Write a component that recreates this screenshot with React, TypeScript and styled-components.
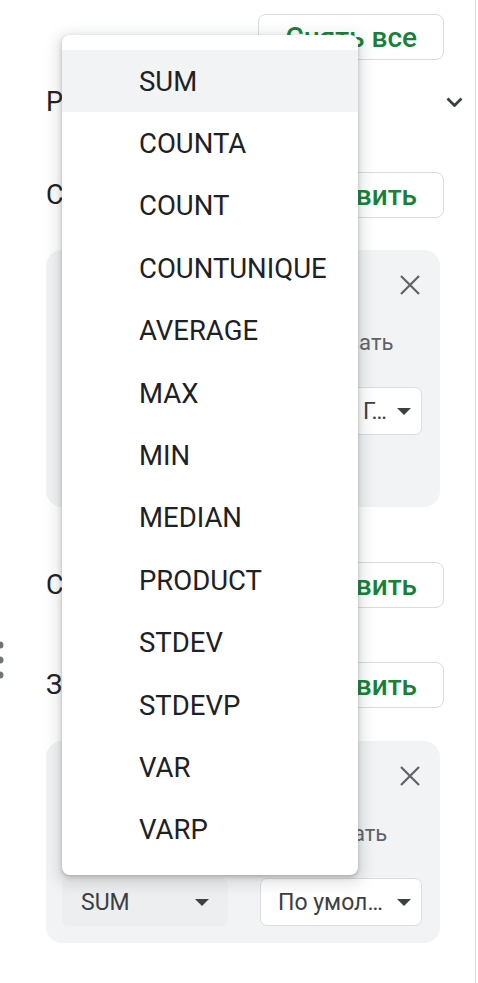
import styled, { createGlobalStyle } from "styled-components";

const GlobalStyle = createGlobalStyle`
  html, body {
    margin: 0;
    padding: 0;
    background: #ffffff;
  }
  body {
    font-family: Roboto, "Noto Sans", Arial, sans-serif;
    color: #202124;
    overflow: hidden;
  }
`;

const Page = styled.div`
  position: relative;
  box-sizing: border-box;
  width: 476px;
  min-height: 983px;
  padding: 14px 31px 0 46px;
  border-right: 1px solid #dadce0;
  display: flex;
  flex-direction: column;
`;

const TopBar = styled.div`
  display: flex;
  justify-content: flex-end;
  align-items: center;
  height: 46px;
`;

const OutlineButton = styled.button`
  box-sizing: border-box;
  height: 46px;
  padding: 0 26px;
  border: 1px solid #dadce0;
  border-radius: 8px;
  background: #ffffff;
  color: #188038;
  font-family: Roboto, Arial, sans-serif;
  font-size: 28px;
  font-weight: 500;
  cursor: pointer;
`;

const Row = styled.div<{ $top: number }>`
  display: flex;
  justify-content: space-between;
  align-items: center;
  height: 46px;
  margin-top: ${(p) => p.$top}px;
`;

const SectionLabel = styled.span`
  font-size: 27px;
  color: #202124;
`;

const ChevronBox = styled.span`
  display: flex;
  align-items: center;
  margin-right: -19px;
  color: #3c4043;
`;

const Card = styled.div<{ $top: number }>`
  margin-top: ${(p) => p.$top}px;
  margin-right: 4px;
  padding: 15px 18px 17px 16px;
  border-radius: 16px;
  background: #f1f3f4;
  display: flex;
  flex-direction: column;
`;

const CardHeader = styled.div`
  display: flex;
  justify-content: space-between;
  align-items: center;
  height: 40px;
`;

const FieldName = styled.span`
  font-size: 25px;
  font-weight: 500;
  color: #202124;
`;

const CloseButton = styled.span`
  display: flex;
  align-items: center;
  margin-right: 2px;
  color: #5f6368;
`;

const Fields = styled.div`
  display: grid;
  grid-template-columns: 166px 1fr;
  column-gap: 32px;
  margin-top: 23px;
`;

const FieldLabel = styled.span`
  font-size: 22px;
  line-height: 30px;
  color: #5f6368;
  white-space: nowrap;
`;

const Select = styled.div<{ $active?: boolean }>`
  box-sizing: border-box;
  height: 48px;
  margin-top: 29px;
  display: flex;
  align-items: center;
  justify-content: space-between;
  padding: ${(p) => (p.$active ? "0 18px" : "0 10px 0 17px")};
  border-radius: 7px;
  border: 1px solid ${(p) => (p.$active ? "transparent" : "#dadce0")};
  background: ${(p) => (p.$active ? "#eceef0" : "#ffffff")};
  font-size: 23px;
  color: #3c4043;
  white-space: nowrap;
`;

const CheckRow = styled.label`
  display: flex;
  align-items: center;
  gap: 14px;
  height: 40px;
  margin-top: 15px;
  font-size: 24px;
  color: #3c4043;
`;

const CheckBox = styled.span`
  box-sizing: border-box;
  width: 26px;
  height: 26px;
  border-radius: 4px;
  background: #188038;
`;

const DragHandle = styled.span`
  position: absolute;
  left: -4px;
  top: 638px;
  display: flex;
  color: #70757a;
`;

const Menu = styled.ul`
  position: absolute;
  top: 35px;
  left: 62px;
  width: 296px;
  margin: 0;
  padding: 15px 0 14px;
  list-style: none;
  background: #ffffff;
  border-radius: 8px;
  box-shadow: 0 2px 4px rgba(60, 64, 67, 0.3), 0 4px 14px 5px rgba(60, 64, 67, 0.15);
`;

const MenuItem = styled.li<{ $hover?: boolean }>`
  display: flex;
  align-items: center;
  height: 62.4px;
  padding-left: 77px;
  font-size: 27.5px;
  color: #202124;
  background: ${(p) => (p.$hover ? "#f1f3f4" : "transparent")};
`;

const Triangle = () => (
  <svg width="14" height="7" viewBox="0 0 14 7" aria-hidden="true">
    <path d="M0 0h14L7 7z" fill="currentColor" />
  </svg>
);

const CloseIcon = () => (
  <svg width="20" height="20" viewBox="0 0 20 20" aria-hidden="true">
    <path d="M1 1l18 18M19 1L1 19" stroke="currentColor" strokeWidth="2.2" fill="none" />
  </svg>
);

const functions = [
  "SUM",
  "COUNTA",
  "COUNT",
  "COUNTUNIQUE",
  "AVERAGE",
  "MAX",
  "MIN",
  "MEDIAN",
  "PRODUCT",
  "STDEV",
  "STDEVP",
  "VAR",
  "VARP",
];

export default function App() {
  return (
    <>
      <GlobalStyle />
      <Page>
        <TopBar>
          <OutlineButton>Снять все</OutlineButton>
        </TopBar>

        <Row $top={19}>
          <SectionLabel>Рекомендации</SectionLabel>
          <ChevronBox>
            <svg width="17" height="10" viewBox="0 0 17 10" aria-hidden="true">
              <path d="M1.5 1.5l7 7 7-7" stroke="currentColor" strokeWidth="2.8" fill="none" />
            </svg>
          </ChevronBox>
        </Row>

        <Row $top={47}>
          <SectionLabel>Строки</SectionLabel>
          <OutlineButton>Добавить</OutlineButton>
        </Row>

        <Card $top={32}>
          <CardHeader>
            <FieldName>Город</FieldName>
            <CloseButton>
              <CloseIcon />
            </CloseButton>
          </CardHeader>
          <Fields>
            <FieldLabel>Порядок</FieldLabel>
            <FieldLabel>Сортировать</FieldLabel>
            <Select>
              По возр… <Triangle />
            </Select>
            <Select>
              SUM из Г… <Triangle />
            </Select>
          </Fields>
          <CheckRow>
            <CheckBox />
            Показывать итоги
          </CheckRow>
        </Card>

        <Row $top={55}>
          <SectionLabel>Столбцы</SectionLabel>
          <OutlineButton>Добавить</OutlineButton>
        </Row>

        <Row $top={54}>
          <SectionLabel>Значения</SectionLabel>
          <OutlineButton>Добавить</OutlineButton>
        </Row>

        <Card $top={33}>
          <CardHeader>
            <FieldName>Продажи</FieldName>
            <CloseButton>
              <CloseIcon />
            </CloseButton>
          </CardHeader>
          <Fields>
            <FieldLabel>Суммировать</FieldLabel>
            <FieldLabel>Показывать</FieldLabel>
            <Select $active>
              SUM <Triangle />
            </Select>
            <Select>
              По умол… <Triangle />
            </Select>
          </Fields>
        </Card>

        <DragHandle>
          <svg width="8" height="44" viewBox="0 0 8 44" aria-hidden="true">
            <circle cx="4" cy="7" r="3.5" fill="currentColor" />
            <circle cx="4" cy="22" r="3.5" fill="currentColor" />
            <circle cx="4" cy="37" r="3.5" fill="currentColor" />
          </svg>
        </DragHandle>

        <Menu>
          {functions.map((name, i) => (
            <MenuItem key={name} $hover={i === 0}>
              {name}
            </MenuItem>
          ))}
        </Menu>
      </Page>
    </>
  );
}
